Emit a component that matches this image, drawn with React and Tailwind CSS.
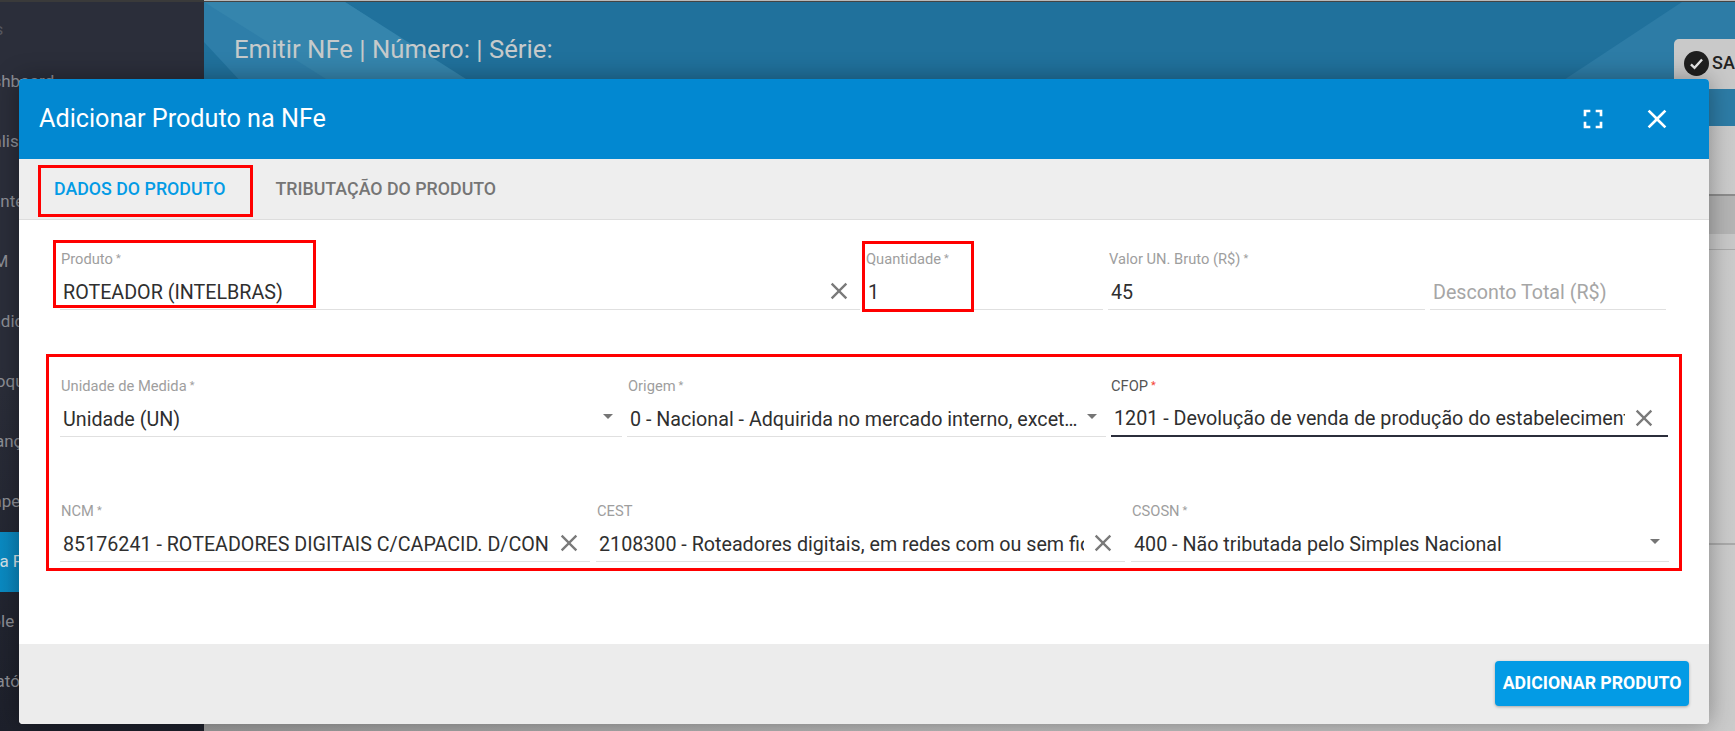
import React from "react";

const CloseIcon = ({ className }) => (
  <svg viewBox="0 0 24 24" className={className} fill="currentColor">
    <path d="M19 6.41L17.59 5 12 10.59 6.41 5 5 6.41 10.59 12 5 17.59 6.41 19 12 13.41 17.59 19 19 17.59 13.41 12z" />
  </svg>
);
const FullIcon = ({ className }) => (
  <svg viewBox="0 0 24 24" className={className} fill="currentColor">
    <path d="M7 14H5v5h5v-2H7v-3zm-2-4h2V7h3V5H5v5zm12 7h-3v2h5v-5h-2v3zM14 5v2h3v3h2V5h-5z" />
  </svg>
);
const Arrow = () => (
  <svg viewBox="0 0 24 24" className="w-6 h-6 shrink-0 text-[#757575] mr-[-3px] mt-[-4px]" fill="currentColor">
    <path d="M7 10l5 5 5-5z" />
  </svg>
);

const Field = ({ label, value, width, icon, iconClass, focused, muted, clip }) => (
  <div className={`${width} h-[58px] flex flex-col shrink-0 ${focused ? "border-b-2 border-[#2b2e3b]" : "border-b border-[#e0e0e0]"}`}>
    <div className={`h-[16px] text-[14.7px] leading-[14px] whitespace-nowrap ${focused ? "text-[#555]" : "text-[#9e9e9e] pl-[1px]"}`}>
      {label}
      {label && label !== "CEST" && (
        <span className={`align-top text-[11px] ml-[3px] ${focused ? "text-[#f44336]" : "text-[#9e9e9e]"}`}>*</span>
      )}
    </div>
    <div className="flex-1 flex items-center pl-[3px] pr-[5px] pt-[5px] min-w-0">
      <div className={`flex-1 min-w-0 overflow-hidden whitespace-nowrap text-[19.7px] leading-[24px] pt-[3px] ${clip ? "" : "text-ellipsis"} ${muted ? "text-[#a6a6a6]" : "text-[#2f2f2f]"}`}>
        {value}
      </div>
      {icon === "x" && <CloseIcon className={`w-[28px] h-[28px] shrink-0 text-[#7a7a7a] ml-[5px] ${iconClass}`} />}
      {icon === "arrow" && <Arrow />}
    </div>
  </div>
);

const side = [
  { t: "Menus", c: "-ml-[48px] text-[#55575f]", h: "h-[50px] pt-[6px]" },
  { t: "Dashboard", c: "-ml-[28px]", h: "h-[60px]" },
  { t: "Análises", c: "-ml-[28px]", h: "h-[60px]" },
  { t: "Clientes", c: "-ml-[28px]", h: "h-[60px]" },
  { t: "CRM", c: "-ml-[28px]", h: "h-[60px]" },
  { t: "Vendidos", c: "-ml-[28px]", h: "h-[60px]" },
  { t: "Estoque", c: "-ml-[28px]", h: "h-[60px]" },
  { t: "Finanças", c: "-ml-[28px]", h: "h-[60px]" },
  { t: "Chapeamento", c: "-ml-[28px]", h: "h-[60px]" },
  { t: "Nota Fiscal", c: "-ml-[28px] text-[#d5e3ea]", h: "h-[60px] bg-gradient-to-r from-[#0a8ac2] to-[#0f6fa0]" },
  { t: "Controle", c: "-ml-[50px]", h: "h-[60px]" },
  { t: "Relatórios", c: "-ml-[28px]", h: "h-[60px]" },
];

export default function App() {
  return (
    <div className="relative w-[1735px] h-[731px] overflow-hidden bg-[#b9b9b9] flex" style={{ fontFamily: "Roboto, sans-serif" }}>
      {/* Sidebar */}
      <aside className="w-[204px] h-full shrink-0 bg-gradient-to-b from-[#2b2e3a] via-[#2b2e3a] to-[#1d202b] border-t-2 border-[#3a3a3a] overflow-hidden">
        {side.map((s) => (
          <div key={s.t} className={`${s.h} flex items-center`}>
            <span className={`whitespace-nowrap text-[17px] text-[#8d8f96] ${s.c}`}>{s.t}</span>
          </div>
        ))}
      </aside>

      {/* Main column */}
      <main className="flex-1 min-w-0 h-full flex flex-col">
        <div className="h-[2px] bg-[#b9b9b9] border-b border-[#444]" />
        <header className="relative h-[124px] shrink-0 bg-[#20719c] overflow-hidden">
          <svg className="absolute inset-0 w-full h-full" viewBox="0 0 1531 124" preserveAspectRatio="none">
            <polygon points="0,0 141,0 330,124 78,124 0,40" fill="#2e7ea9" />
            <polygon points="0,0 141,0 262,77 122,77" fill="#3585ad" />
            <polygon points="1478,0 1531,0 1531,124 1290,124" fill="#2d7ca6" />
          </svg>
          <h1 className="relative pl-[30px] pt-[30px] text-[25.7px] leading-[34px] font-normal text-[#c6cacb]">Emitir NFe | Número: | Série:</h1>
          <div className="absolute left-[1470px] top-[37px] w-[70px] h-[50px] bg-[#c9c9c9] rounded-tl-[5px] flex items-start pl-[10px] pt-[12px] gap-[3px]">
            <span className="w-[25px] h-[25px] rounded-full bg-[#1f1f1f] shrink-0 flex items-center justify-center">
              <svg viewBox="0 0 24 24" className="w-[19px] h-[19px]" fill="none" stroke="#e8e8e8" strokeWidth="3">
                <path d="M5 13l4.5 4.5L19 7" />
              </svg>
            </span>
            <span className="text-[18px] leading-[24px] text-[#222] font-medium">SALVAR</span>
          </div>
        </header>
        <div className="flex-1 flex flex-col bg-gradient-to-r from-[#9d9d9d] via-[#bcbcbc] to-[#cbcbcb]">
          <div className="h-[70px] border-b-2 border-[#8c8c8c]" />
          <div className="h-[38px] bg-[#b4b4b4]" />
          <div className="h-[16px] bg-[#c8c8c8] border-b border-[#aaa]" />
          <div className="h-[295px] border-b-2 border-[#aaa]" />
        </div>
      </main>

      {/* Modal */}
      <section className="absolute left-[19px] top-[79px] w-[1690px] h-[645px] rounded-[4px] overflow-hidden flex flex-col bg-white shadow-[0_0_24px_rgba(0,0,0,0.35)]">
        <div className="h-[80px] shrink-0 bg-[#0288d1] flex items-center pl-[20px] text-white">
          <h2 className="flex-1 text-[25.2px] leading-[30px] font-normal">Adicionar Produto na NFe</h2>
          <FullIcon className="w-[32px] h-[32px] mr-[32px]" />
          <CloseIcon className="w-[32px] h-[32px] mr-[36px]" />
        </div>
        <nav className="h-[61px] shrink-0 bg-[#eeeeee] border-b border-[#dddddd] flex items-center pl-[35px] gap-[50px] text-[17.8px] font-medium">
          <span className="text-[#039be5]">DADOS DO PRODUTO</span>
          <span className="text-[#757575]">TRIBUTAÇÃO DO PRODUTO</span>
        </nav>
        <div className="flex-1 pt-[32px] pl-[41px] flex flex-col">
          <div className="flex gap-[5px]">
            <Field label="Produto" value="ROTEADOR (INTELBRAS)" width="w-[800px]" icon="x" iconClass="mr-[2px]" />
            <Field label="Quantidade" value="1" width="w-[238px]" />
            <Field label="Valor UN. Bruto (R$)" value="45" width="w-[317px]" />
            <Field label="" value="Desconto Total (R$)" width="w-[236px]" muted />
          </div>
          <div className="flex gap-[5px] mt-[69px]">
            <Field label="Unidade de Medida" value="Unidade (UN)" width="w-[562px]" icon="arrow" />
            <Field label="Origem" value="0 - Nacional - Adquirida no mercado interno, exceto a indicada" width="w-[479px]" icon="arrow" />
            <Field label="CFOP" value="1201 - Devolução de venda de produção do estabelecimento" width="w-[557px]" icon="x" iconClass="mr-[5px]" focused clip />
          </div>
          <div className="flex gap-[6px] mt-[67px]">
            <Field label="NCM" value="85176241 - ROTEADORES DIGITAIS C/CAPACID. D/CONEXAO" width="w-[530px]" icon="x" iconClass="mr-[2px]" clip />
            <Field label="CEST" value="2108300 - Roteadores digitais, em redes com ou sem fio" width="w-[529px]" icon="x" iconClass="mr-[3px]" clip />
            <Field label="CSOSN" value="400 - Não tributada pelo Simples Nacional" width="w-[538px]" icon="arrow" />
          </div>
        </div>
        <div className="h-[80px] shrink-0 bg-[#ececec] flex justify-end items-start pt-[17px] pr-[20px]">
          <button className="w-[194px] h-[45px] rounded-[4px] bg-[#039be5] text-white text-[17.7px] font-bold whitespace-nowrap shadow-[0_1px_3px_rgba(0,0,0,0.3)]">ADICIONAR PRODUTO</button>
        </div>
      </section>

      {/* Red annotation boxes */}
      <div className="absolute left-[38px] top-[165px] w-[215px] h-[52px] border-[3px] border-[#ff0000]" />
      <div className="absolute left-[53px] top-[240px] w-[263px] h-[68px] border-[3px] border-[#ff0000]" />
      <div className="absolute left-[862px] top-[241px] w-[112px] h-[71px] border-[3px] border-[#ff0000]" />
      <div className="absolute left-[46px] top-[354px] w-[1636px] h-[217px] border-[3px] border-[#ff0000]" />
    </div>
  );
}
